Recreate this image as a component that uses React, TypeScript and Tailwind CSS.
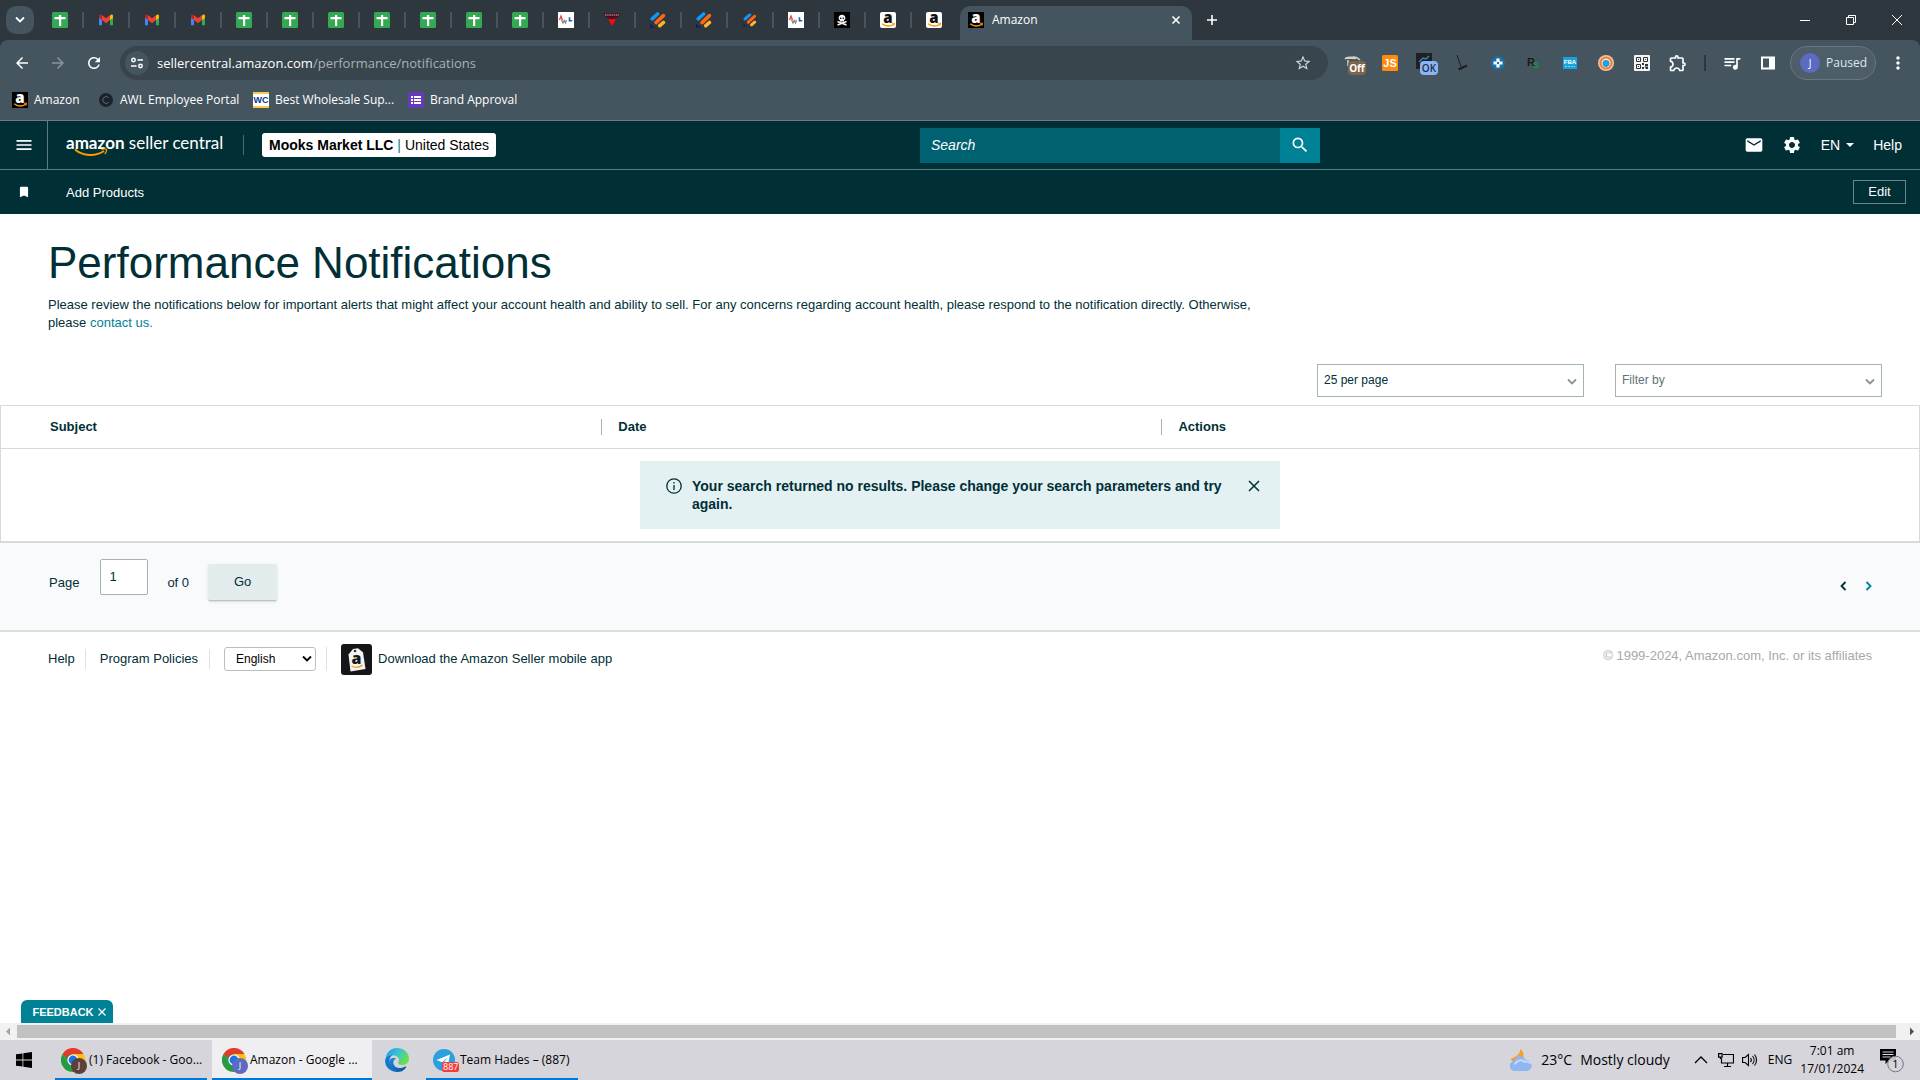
import type { ReactNode } from "react";
import {
  MdArrowBack,
  MdArrowForward,
  MdRefresh,
  MdStarBorder,
  MdQueueMusic,
  MdOutlineExtension,
  MdMoreVert,
  MdMenu,
  MdEmail,
  MdSettings,
  MdSearch,
  MdBookmark,
} from "react-icons/md";

const SheetsIcon = () => (
  <svg viewBox="0 0 16 16" className="w-4 h-4">
    <rect width="16" height="16" rx="1.5" fill="#34a853" />
    <path d="M2.500 5h11v2.200h-11zM7 3h2.200v11H7z" fill="#fff" />
  </svg>
);

const GmailIcon = () => (
  <svg viewBox="0 0 16 16" className="w-4 h-4">
    <path d="M1 4.5v8.8h3V6.5z" fill="#4285f4" />
    <path d="M12 6.500v6.800H15V4.500z" fill="#34a853" />
    <path d="M12 3.400v4.700L15 5.900V4c0-1.400-1.300-1.900-2.200-1.100z" fill="#fbbc04" />
    <path d="M4 8V3.200L8 6.300l4-3.100V8L8 11.200z" fill="#ea4335" />
    <path d="M1 4v1.800L4 8V3.400l-.8-.5C2.300 2.100 1 2.600 1 4z" fill="#c5221f" />
  </svg>
);

const AwlIcon = () => (
  <svg viewBox="0 0 16 16" className="w-4 h-4">
    <rect width="16" height="16" fill="#fff" />
    <path d="M1.500 8L3 4l1.500 4" fill="none" stroke="#e0454a" strokeWidth="1.300" />
    <path d="M3.500 7.500L5 11l1.300-2.500L7.500 11l1-3" fill="none" stroke="#888" strokeWidth="1.300" />
    <path d="M11.500 5.200v3.600h2.700" fill="none" stroke="#2d56b5" strokeWidth="1.600" />
  </svg>
);

const RedTriangleIcon = () => (
  <svg viewBox="0 0 16 16" className="w-4 h-4">
    <path d="M0 1.500h16L14.500 5h-13z" fill="#351326" />
    <path d="M1 3h14" stroke="#c9737c" strokeWidth="1.500" strokeDasharray="1.500 .7" />
    <path d="M2.500 5h11L12 7.500H4z" fill="#5d0e1c" />
    <path d="M4 7.300h8L8.300 14z" fill="#f10d15" />
  </svg>
);

const StripesIcon = () => (
  <svg viewBox="0 0 16 16" className="w-4 h-4">
    <path d="M0 11.500V16h5z" fill="#14205c" />
    <g strokeLinecap="round" strokeWidth="3.600">
      <path d="M2.200 6.800L7.600 2" stroke="#1496f5" />
      <path d="M6 10.600l7.400-7" stroke="#ff6513" />
      <path d="M9.800 13.700l3.600-3.200" stroke="#fdb52a" />
    </g>
  </svg>
);

const SmallStripesIcon = () => (
  <div className="scale-85">
    <StripesIcon />
  </div>
);

const SkullIcon = () => (
  <svg viewBox="0 0 16 16" className="w-4 h-4">
    <rect width="16" height="16" fill="#000" />
    <path d="M8 2.700c-2.200 0-3.400 1.400-3.400 3.200 0 1.200.6 2 1.400 2.400v1.300h4V8.300c.8-.4 1.400-1.200 1.400-2.400C11.400 4.100 10.200 2.700 8 2.700z" fill="#f4f4f4" />
    <path d="M3.500 9.500l9 3.500M12.500 9.500l-9 3.500" stroke="#f4f4f4" strokeWidth="1.600" />
    <circle cx="6.700" cy="6.200" r=".8" />
    <circle cx="9.300" cy="6.200" r=".8" />
  </svg>
);

type AmazonIconProps = { bg: string; fg: string };

const AmazonIcon = ({ bg, fg }: AmazonIconProps) => (
  <svg viewBox="0 0 16 16" className="w-4 h-4 overflow-visible">
    <rect width="16" height="16" rx={fg === "#fff" ? 0 : 2} fill={bg} />
    <text
      x="8"
      y="10.500"
      textAnchor="middle"
      fontFamily="Open Sans, sans-serif"
      fontWeight="800"
      fontSize="15"
      fill={fg}
    >
      a
    </text>
    <path d="M2.200 11.800c3.500 3 8.500 2.800 11.500.4" fill="none" stroke="#ff9900" strokeWidth="1.400" />
    <path d="M12 11.300l2.500-.2-.4 2.500" fill="none" stroke="#ff9900" strokeWidth="1" />
  </svg>
);

const ChromeIcon = () => (
  <svg viewBox="0 0 24 24" className="w-6 h-6">
    <circle cx="12" cy="12" r="12" fill="#fbc116" />
    <path d="M1.600 6A12 12 0 0 0 12 24l5.200-9L12 12 6.800 15z" fill="#229a48" />
    <path d="M1.600 6l5.200 9L12 12V6.500z" fill="#229a48" />
    <path d="M1.600 6A12 12 0 0 1 22.400 6H12a6 6 0 0 0-5.600 4z" fill="#e33b2e" />
    <circle cx="12" cy="12" r="5.600" fill="#fff" />
    <circle cx="12" cy="12" r="4.400" fill="#1a73e8" />
  </svg>
);

const EdgeIcon = () => (
  <svg viewBox="0 0 24 24" className="w-6 h-6">
    <defs>
      <linearGradient id="edgeTop" x1="0" y1="0" x2="1" y2="0.500">
        <stop offset="0" stopColor="#1d9be0" />
        <stop offset="0.500" stopColor="#35c1d8" />
        <stop offset="1" stopColor="#6be04e" />
      </linearGradient>
      <linearGradient id="edgeBottom" x1="0" y1="0" x2="1" y2="1">
        <stop offset="0" stopColor="#1b8de0" />
        <stop offset="1" stopColor="#0c4fa0" />
      </linearGradient>
    </defs>
    <path d="M.500 11C1 4.500 6 0 12 0c7 0 12 5 12 10.500 0 4-3 6.500-6.500 6.500-3 0-4.500-1-4.500-2 0-.8 1-1.200 1-3C14 9.500 11.500 7.500 8 7.500 4 7.500 1.500 9 .500 11z" fill="url(#edgeTop)" />
    <path d="M.2 12C.8 9 4 7.200 7.500 7.200c-2.500 1.300-3.500 4-3 7 .8 4.300 4 7.500 8.500 9.300C6 24.800-.5 19.500.2 12z" fill="#1277cf" />
    <path d="M11 10.500c-2 1-3.200 3-2.500 5.500 1 3.500 6 5.500 11.500 2.700.8-.4 1.500.3 1 1C18.500 23 15.500 24 12.500 24c-5-1-8.500-5-8.500-9.500 0-3.500 3-5.500 7-4z" fill="url(#edgeBottom)" />
  </svg>
);

const TelegramIcon = () => (
  <svg viewBox="0 0 24 24" className="w-6 h-6">
    <circle cx="12" cy="12" r="11" fill="#2ba0dc" />
    <path d="M4.500 12L18 6.500 15.800 18l-4.300-3.200 4.500-5.500-6 5z" fill="#fff" />
  </svg>
);

const WindowsIcon = () => (
  <svg viewBox="0 0 16 16" className="w-4 h-4">
    <path d="M0 2.300l6.500-.9v6.200H0zM7.300 1.300L16 0v7.600H7.300zM0 8.400h6.500v6.200L0 13.700zM7.300 8.400H16V16l-8.700-1.200z" />
  </svg>
);

const Chevron = ({ className }: { className: string }) => (
  <svg viewBox="0 0 10 8" className={className} fill="none" stroke="currentColor" strokeWidth="1.800">
    <path d="M1 1.500l4 4 4-4" />
  </svg>
);

const pinnedTabs: { name: string; icon: ReactNode }[] = [
  { name: "Sheet 1", icon: <SheetsIcon /> },
  { name: "Mail 1", icon: <GmailIcon /> },
  { name: "Mail 2", icon: <GmailIcon /> },
  { name: "Mail 3", icon: <GmailIcon /> },
  { name: "Sheet 2", icon: <SheetsIcon /> },
  { name: "Sheet 3", icon: <SheetsIcon /> },
  { name: "Sheet 4", icon: <SheetsIcon /> },
  { name: "Sheet 5", icon: <SheetsIcon /> },
  { name: "Sheet 6", icon: <SheetsIcon /> },
  { name: "Sheet 7", icon: <SheetsIcon /> },
  { name: "Sheet 8", icon: <SheetsIcon /> },
  { name: "Portal 1", icon: <AwlIcon /> },
  { name: "Store", icon: <RedTriangleIcon /> },
  { name: "Tracker 1", icon: <StripesIcon /> },
  { name: "Tracker 2", icon: <StripesIcon /> },
  { name: "Tracker 3", icon: <SmallStripesIcon /> },
  { name: "Portal 2", icon: <AwlIcon /> },
  { name: "Skull", icon: <SkullIcon /> },
  { name: "Shop 1", icon: <AmazonIcon bg="#fff" fg="#111" /> },
  { name: "Shop 2", icon: <AmazonIcon bg="#fff" fg="#111" /> },
];

const extensions: { name: string; icon: ReactNode }[] = [
  {
    name: "Camel",
    icon: (
      <svg viewBox="0 0 24 24" className="w-6 h-6">
        <path d="M3 8c2-3 5-1 9-2 3 0 4 1 6 3M6 9v6M4 7l10 .5" fill="none" stroke="#cfd0cf" strokeWidth="1.600" />
        <rect x="6" y="10" width="18" height="14" rx="4" fill="#7d654a" />
        <text x="15" y="21" textAnchor="middle" fontSize="10" fontWeight="700" fontFamily="Open Sans, sans-serif" fill="#fff">
          Off
        </text>
      </svg>
    ),
  },
  {
    name: "JS",
    icon: (
      <svg viewBox="0 0 16 16" className="w-4 h-4">
        <rect width="16" height="16" rx="1.500" fill="#ff8a0c" />
        <text x="8" y="12" textAnchor="middle" fontSize="11" fontWeight="700" fontFamily="Liberation Sans, sans-serif" fill="#fff">
          JS
        </text>
      </svg>
    ),
  },
  {
    name: "Status",
    icon: (
      <svg viewBox="0 0 24 24" className="w-6 h-6">
        <rect x="2" y="2" width="16" height="16" fill="#231f20" />
        <path d="M5 11l4-4 3 1 3-3" fill="none" stroke="#1d8fc4" strokeWidth="1.500" />
        <rect x="6" y="10" width="18" height="14" rx="4" fill="#8ab4f8" />
        <text x="15" y="21" textAnchor="middle" fontSize="10" fontWeight="600" fontFamily="Open Sans, sans-serif" fill="#22304a">
          OK
        </text>
      </svg>
    ),
  },
  {
    name: "Keepa",
    icon: (
      <svg viewBox="0 0 16 16" className="w-4 h-4" fill="none" stroke="#1c1f22">
        <path d="M3 0l4.500 13" strokeWidth="1" />
        <path d="M4.500 14.500l8.500-4" strokeWidth="2" />
      </svg>
    ),
  },
  {
    name: "Helper",
    icon: (
      <svg viewBox="0 0 16 16" className="w-4 h-4">
        <circle cx="8" cy="8" r="7" fill="#1c6ea6" />
        <path d="M8 3.500v9M3.500 8h9" stroke="#fff" strokeWidth="3.200" />
        <circle cx="8" cy="8" r="1.200" fill="#1c6ea6" />
      </svg>
    ),
  },
  {
    name: "RS",
    icon: (
      <svg viewBox="0 0 16 16" className="w-4 h-4" fontFamily="Liberation Sans, sans-serif" fontWeight="700">
        <text x="1" y="11" fontSize="11" fill="#1b1b1b">
          R
        </text>
        <text x="7" y="13" fontSize="9" fill="#139a40">
          S
        </text>
      </svg>
    ),
  },
  {
    name: "FBA",
    icon: (
      <svg viewBox="0 0 14 14" className="w-3.5 h-3.5">
        <rect y="1" width="14" height="12" fill="#18a3dc" />
        <text x="7" y="8" textAnchor="middle" fontSize="6" fontWeight="700" fontFamily="Liberation Sans, sans-serif" fill="#fff">
          FBA
        </text>
        <path d="M2 10.500h10" stroke="#7fd0ef" strokeDasharray="2 1" />
      </svg>
    ),
  },
  {
    name: "Ring",
    icon: (
      <svg viewBox="0 0 16 16" className="w-4 h-4">
        <circle cx="8" cy="8" r="8" fill="#f9c49a" />
        <circle cx="8" cy="8" r="6.500" fill="#ee7d3b" />
        <circle cx="8" cy="8" r="4.500" fill="#f6e3d0" />
        <circle cx="8" cy="8.500" r="3.400" fill="#1ba4dc" />
      </svg>
    ),
  },
  {
    name: "QR",
    icon: (
      <svg viewBox="0 0 16 16" className="w-4 h-4">
        <rect width="16" height="16" rx="1" fill="#f3f3f3" />
        <path d="M2.500 2.500h4v4h-4zM9.500 2.500h4v4h-4zM2.500 9.500h4v4h-4z" fill="none" stroke="#333" />
        <path d="M8 8h2v2H8zM11 9h3v2h-3zM8 12h2v2H8zM10.500 11.500h3.500V14h-2zM4 4h1v1H4zM11 4h1v1h-1zM4 11h1v1H4z" fill="#333" />
      </svg>
    ),
  },
  { name: "Extensions", icon: <MdOutlineExtension className="w-5 h-5 text-white" /> },
];

const bookmarks: { label: string; width: string; icon: ReactNode }[] = [
  { label: "Amazon", width: "w-[86px]", icon: <AmazonIcon bg="#000" fg="#fff" /> },
  {
    label: "AWL Employee Portal",
    width: "w-[155px]",
    icon: (
      <svg viewBox="0 0 16 16" className="w-4 h-4">
        <circle cx="8" cy="8" r="7" fill="#1a222b" />
        <path d="M10.500 5.500a3.400 3.400 0 1 0 0 5" fill="none" stroke="#5b6975" />
      </svg>
    ),
  },
  {
    label: "Best Wholesale Sup...",
    width: "w-[155px]",
    icon: (
      <svg viewBox="0 0 16 16" className="w-4 h-4">
        <rect width="16" height="16" fill="#fff" />
        <path d="M0 0h16v2H0zM0 14h16v2H0z" fill="#fcc944" />
        <text x="8" y="11" textAnchor="middle" fontSize="9" fontWeight="700" fontFamily="Liberation Sans, sans-serif" fill="#0a3597">
          WC
        </text>
      </svg>
    ),
  },
  {
    label: "Brand Approval",
    width: "w-[120px]",
    icon: (
      <svg viewBox="0 0 16 16" className="w-4 h-4">
        <rect width="16" height="16" rx="1" fill="#673ab7" />
        <path d="M3 4h2v2H3zM3 7h2v2H3zM3 10h2v2H3zM6 4h7v2H6zM6 7h7v2H6zM6 10h7v2H6z" fill="#fff" />
      </svg>
    ),
  },
];

const BrowserChrome = () => (
  <div className="font-['Open_Sans',sans-serif] text-white bg-[#2d373d]">
    <div className="h-10 flex items-center pl-1.5">
      <button aria-label="Search tabs" className="w-7 h-7 mr-[3px] rounded-[10px] bg-[#45555f] flex items-center justify-center">
        <Chevron className="w-2.5 h-2" />
      </button>
      {pinnedTabs.map((tab, i) => (
        <button
          key={tab.name}
          aria-label={tab.name}
          className="w-[46px] h-4 flex items-center justify-center relative"
        >
          {tab.icon}
          {i < pinnedTabs.length - 1 && (
            <span className="absolute right-0 w-0.5 h-4 translate-x-px bg-[#45555f]" />
          )}
        </button>
      ))}
      <div className="ml-[3px] w-[232px] h-[34px] self-end rounded-t-[10px] bg-[#45555f] flex items-center pl-2 pr-2.5 pb-1.5">
        <AmazonIcon bg="#000" fg="#fff" />
        <span className="ml-2 grow text-[12px]">Amazon</span>
        <button aria-label="Close tab">
          <svg viewBox="0 0 12 12" className="w-3 h-3" stroke="#fff" strokeWidth="1.600">
            <path d="M2.500 2.500l7 7M9.500 2.500l-7 7" />
          </svg>
        </button>
      </div>
      <button aria-label="New tab" className="ml-3.5 mr-auto">
        <svg viewBox="0 0 12 12" className="w-3 h-3" stroke="#fff" strokeWidth="1.600">
          <path d="M6 1v10M1 6h10" />
        </svg>
      </button>
      <button aria-label="Minimize" className="w-[46px] flex justify-center">
        <svg viewBox="0 0 10 10" className="w-2.5 h-2.5" stroke="#fff">
          <path d="M0 5.500h10" />
        </svg>
      </button>
      <button aria-label="Restore" className="w-[46px] flex justify-center">
        <svg viewBox="0 0 10 10" className="w-2.5 h-2.5" stroke="#fff" fill="none">
          <path d="M.500 2.500h7v7h-7zM2.500 2.500v-2h7v7h-2" />
        </svg>
      </button>
      <button aria-label="Close" className="w-[46px] flex justify-center">
        <svg viewBox="0 0 10 10" className="w-2.5 h-2.5" stroke="#fff">
          <path d="M0 0l10 10M10 0L0 10" />
        </svg>
      </button>
    </div>

    <div className="bg-[#45555f] rounded-t-lg border-b border-[#6f7c84]">
      <div className="h-11 pt-0.5 flex items-center">
        <button aria-label="Back" className="w-9 ml-1 flex justify-center">
          <MdArrowBack className="w-[18px] h-[18px]" />
        </button>
        <button aria-label="Forward" className="w-9 flex justify-center text-[#8b969c]">
          <MdArrowForward className="w-[18px] h-[18px]" />
        </button>
        <button aria-label="Reload" className="w-9 flex justify-center">
          <MdRefresh className="w-[18px] h-[18px]" />
        </button>
        <div className="ml-2 grow h-[34px] rounded-full bg-[#38454c] flex items-center pl-[5px] pr-4">
          <button aria-label="Site information" className="w-6 h-6 rounded-full bg-[#45555f] flex items-center justify-center">
            <svg viewBox="0 0 14 14" className="w-3.5 h-3.5" fill="none" stroke="#fff" strokeWidth="1.500">
              <circle cx="3.500" cy="4" r="1.700" />
              <path d="M7.500 4H13M1 10h5.500" />
              <circle cx="10.500" cy="10" r="1.700" />
            </svg>
          </button>
          <div role="textbox" aria-label="Address" className="ml-2 grow text-[13px] leading-5">
            sellercentral.amazon.com<span className="text-[#a9b1b5]">/performance/notifications</span>
          </div>
          <button aria-label="Bookmark this page">
            <MdStarBorder className="w-[18px] h-[18px] text-[#d0d4d6]" />
          </button>
        </div>
        <div className="flex items-center ml-2">
          {extensions.map((ext) => (
            <button key={ext.name} aria-label={ext.name} className="w-9 h-7 flex items-center justify-center">
              {ext.icon}
            </button>
          ))}
        </div>
        <span className="w-0.5 h-4 ml-2 mr-2 bg-[#2d373d]" />
        <button aria-label="Media" className="w-9 flex justify-center">
          <MdQueueMusic className="w-5 h-5" />
        </button>
        <button aria-label="Side panel" className="w-9 flex justify-center">
          <svg viewBox="0 0 16 16" className="w-4 h-4">
            <path d="M1 1.500h14v13H1zM3 3.500v9h6v-9z" fill="#fff" fillRule="evenodd" />
          </svg>
        </button>
        <button className="ml-1 w-[86px] h-[34px] rounded-full border border-[#667781] bg-[#4d5e69] flex items-center pl-[9px] gap-1.5 text-[12px] text-[#dbe7f6]">
          <span className="w-5 h-5 rounded-full bg-[#5c6bc0] text-[10px] text-white flex items-center justify-center">J</span>
          Paused
        </button>
        <button aria-label="Menu" className="w-11 flex justify-center">
          <MdMoreVert className="w-5 h-5" />
        </button>
      </div>
      <div className="h-9 pb-1 flex items-center pl-3 text-[12px]">
        {bookmarks.map((b) => (
          <a key={b.label} href="#" className={`${b.width} flex items-center gap-1.5 whitespace-nowrap`}>
            {b.icon}
            {b.label}
          </a>
        ))}
      </div>
    </div>
  </div>
);

const SiteHeader = () => (
  <header className="bg-[#002f36] text-white text-[14px]">
    <div className="h-[49px] flex items-center border-b border-[#5f7b80]">
      <button aria-label="Open menu" className="w-12 h-12 flex items-center justify-center border-r border-[#5f7b80]">
        <MdMenu className="w-5 h-5" />
      </button>
      <a href="#" className="ml-[18px] w-40 pb-1 font-['Lato',sans-serif] text-[17px] leading-5 whitespace-nowrap relative">
        <b>amazon</b> seller central
        <svg viewBox="0 0 36 10" className="absolute left-2 top-[15px] w-9 h-2.5" fill="none" stroke="#ff9900">
          <path d="M1 1.500c8 7 21 7 29 1.500" strokeWidth="2" />
          <path d="M27.500 1.500c2-.6 4-.8 4.800-.2.600.8-.2 3-1.500 4.700" strokeWidth="1.300" />
        </svg>
      </a>
      <span className="w-px h-5 ml-[17px] bg-[#4e6b70]" />
      <button className="ml-[18px] h-6 px-[7px] rounded-[3px] bg-white text-black whitespace-nowrap">
        <b>Mooks Market LLC</b> <span className="text-[#008296]">|</span> United States
      </button>
      <form role="search" className="ml-auto flex h-[35px] w-[400px]">
        <input
          type="text"
          aria-label="Search"
          placeholder="Search"
          className="grow px-[11px] bg-[#006170] italic placeholder:text-white"
        />
        <button type="button" aria-label="Submit search" className="w-10 bg-[#008296] flex items-center justify-center">
          <MdSearch className="w-5 h-5" />
        </button>
      </form>
      <div className="w-[600px] flex items-center justify-end pr-[18px]">
        <button aria-label="Messages">
          <MdEmail className="w-5 h-5" />
        </button>
        <button aria-label="Settings" className="ml-[18px]">
          <MdSettings className="w-5 h-5" />
        </button>
        <button className="ml-[19px] flex items-center gap-1.5">
          EN
          <svg viewBox="0 0 8 4" className="w-2 h-1" fill="#fff">
            <path d="M0 0h8L4 4z" />
          </svg>
        </button>
        <a href="#" className="ml-[19px]">Help</a>
      </div>
    </div>
    <div className="h-11 flex items-center text-[13px]">
      <button aria-label="Bookmarks" className="w-12 flex justify-center">
        <MdBookmark className="w-3.5 h-3.5" />
      </button>
      <a href="#" className="ml-[18px] pt-0.5">Add Products</a>
      <button className="ml-auto mr-3.5 w-[53px] h-6 border border-[#6a8488]">Edit</button>
    </div>
  </header>
);

type FilterSelectProps = { id: string; label: string; text: string; tone: string };

const FilterSelect = ({ id, label, text, tone }: FilterSelectProps) => (
  <div className="relative w-[267px]">
    <label htmlFor={id} className="sr-only">
      {label}
    </label>
    <select
      id={id}
      className={`${tone} appearance-none w-full h-[33px] px-1.5 pb-0.5 border border-[#a2b3b3] bg-white text-[12px]`}
    >
      <option>{text}</option>
    </select>
    <Chevron className="absolute right-[7px] top-3.5 w-2.5 h-2 text-[#879596]" />
  </div>
);

const Notifications = () => (
  <main>
    <div className="px-12 pt-[21px]">
      <h1 className="text-[44px] leading-14">Performance Notifications</h1>
      <p className="mt-[5px] max-w-[1230px] leading-[18px]">
        Please review the notifications below for important alerts that might affect your account health and ability to
        sell. For any concerns regarding account health, please respond to the notification directly. Otherwise, please{" "}
        <a href="#" className="text-[#008296]">contact us.</a>
      </p>
    </div>
    <div className="mt-8 mb-2 pr-[38px] flex justify-end gap-[31px]">
      <FilterSelect id="perPage" label="Results per page" text="25 per page" tone="text-[#002f36]" />
      <FilterSelect id="filterBy" label="Filter" text="Filter by" tone="text-[#5f7377]" />
    </div>

    <div className="border border-b-2 border-[#d5dbdb]">
      <table className="w-full table-fixed">
        <thead>
          <tr className="h-[42px] border-b border-[#d5dbdb] text-left">
            <th className="w-[31.3%] pl-[49px]">Subject</th>
            <th className="w-[29.2%]">
              <div className="h-4 leading-4 pl-4 border-l border-[#a2b3b3]">Date</div>
            </th>
            <th>
              <div className="h-4 leading-4 pl-4 border-l border-[#a2b3b3]">Actions</div>
            </th>
          </tr>
        </thead>
        <tbody>
          <tr>
            <td colSpan={3} className="py-3">
              <div role="alert" className="mx-auto w-[640px] h-[68px] bg-[#e3f1f3] flex items-start pt-4 pl-[26px] pr-5">
                <svg viewBox="0 0 16 16" className="w-4 h-4 mt-px shrink-0" fill="none" stroke="#002f36" strokeWidth="1.300">
                  <circle cx="8" cy="8" r="7.200" />
                  <path d="M8 7v5M8 4v1.500" />
                </svg>
                <p className="ml-2.5 w-[546px] text-[14px] leading-[18px] font-bold">
                  Your search returned no results. Please change your search parameters and try again.
                </p>
                <button aria-label="Dismiss" className="ml-auto mt-[3px]">
                  <svg viewBox="0 0 12 12" className="w-3 h-3" stroke="#002f36" strokeWidth="1.500">
                    <path d="M1 1l10 10M11 1L1 11" />
                  </svg>
                </button>
              </div>
            </td>
          </tr>
        </tbody>
      </table>
    </div>

    <div className="bg-[#f8fafb] border-b-2 border-[#d9dfe1] pt-4 pb-[23px] pl-[49px] pr-[46px] flex items-center">
      <label htmlFor="page">Page</label>
      <div className="ml-[21px] h-12">
        <input
          id="page"
          type="text"
          defaultValue="1"
          className="w-12 h-9 px-2 border border-[#a2b3b3] rounded-[2px] bg-white"
        />
      </div>
      <span className="ml-[19px]">of 0</span>
      <button className="ml-[19px] w-[69px] h-[37px] rounded-[2px] bg-[#e3eced] border-b border-[#b9c3c5] shadow-sm">Go</button>
      <div className="ml-auto pt-1.5 flex gap-4">
        <button aria-label="Previous page">
          <Chevron className="w-2.5 h-2 rotate-90" />
        </button>
        <button aria-label="Next page">
          <Chevron className="w-2.5 h-2 -rotate-90 text-[#008296]" />
        </button>
      </div>
    </div>
  </main>
);

const SiteFooter = () => (
  <footer className="px-12 pt-3 flex items-center">
    <a href="#">Help</a>
    <span className="w-px h-5 ml-2.5 mr-3.5 bg-[#dfe3e4]" />
    <a href="#">Program Policies</a>
    <span className="w-px h-5 ml-[11px] mr-3.5 bg-[#dfe3e4]" />
    <div className="relative w-[92px]">
      <select
        aria-label="Language"
        className="appearance-none w-full h-6 pl-[11px] border border-[#b9bfc0] rounded-[3px] bg-white text-black text-[12px]"
      >
        <option>English</option>
      </select>
      <Chevron className="absolute right-1 top-2 w-2.5 h-2 text-black" />
    </div>
    <span className="w-px h-6 ml-2.5 mr-3.5 bg-[#dfe3e4]" />
    <a href="#" className="flex items-center gap-1.5">
      <svg viewBox="0 0 31 31" className="w-[31px] h-[31px]">
        <rect width="31" height="31" rx="3" fill="#151617" />
        <path d="M7.500 10.500L12 5l5-.8 5 4L24.500 25l-15 2.500z" fill="#f4f4f2" />
        <circle cx="14" cy="7" r="1.300" fill="#333" />
        <text x="15.500" y="20" textAnchor="middle" fontSize="16" fontWeight="800" fontFamily="Open Sans, sans-serif" fill="#151617">
          a
        </text>
        <path d="M10.500 22c3.500 2 7.500 1.600 11-.8" fill="none" stroke="#f79b1c" strokeWidth="1.400" />
      </svg>
      Download the Amazon Seller mobile app
    </a>
    <p className="ml-auto pb-1.5 text-[#a5a9aa]">© 1999-2024, Amazon.com, Inc. or its affiliates</p>
  </footer>
);

const Scrollbar = () => (
  <div className="h-[17px] bg-[#f1f1f1] flex items-center">
    <svg viewBox="0 0 17 17" className="w-[17px] h-[17px]" fill="#a3a3a3">
      <path d="M10 4.500v8l-4-4z" />
    </svg>
    <div className="grow h-[13px] bg-[#c1c1c1]" />
    <svg viewBox="0 0 17 17" className="w-[17px] h-[17px] ml-[7px]" fill="#505050">
      <path d="M7 4.500v8l4-4z" />
    </svg>
  </div>
);

type TaskButtonProps = { title: string; style: string; icon: ReactNode };

const TaskButton = ({ title, style, icon }: TaskButtonProps) => (
  <button className={`${style} h-10 border-b-2 border-[#0078d7] flex items-center pt-0.5 whitespace-nowrap`}>
    {icon}
    {title}
  </button>
);

const Taskbar = () => (
  <div className="h-10 bg-[#d6d5dc] text-black text-[12px] font-['Open_Sans',sans-serif] flex items-center">
    <button aria-label="Start" className="w-12 flex justify-center">
      <WindowsIcon />
    </button>
    <TaskButton
      title="(1) Facebook - Goo..."
      style="ml-[7px] w-[152px] pl-1.5"
      icon={
        <span className="relative mr-1">
          <ChromeIcon />
          <span className="absolute left-2.5 top-2.5 w-4 h-4 rounded-full bg-[#5d4037] text-[9px] text-white flex items-center justify-center">J</span>
        </span>
      }
    />
    <TaskButton
      title="Amazon - Google ..."
      style="ml-[5px] w-40 pl-2.5 bg-[#efeff2]"
      icon={
        <span className="relative mr-1">
          <ChromeIcon />
          <span className="absolute left-2.5 top-2.5 w-4 h-4 rounded-full bg-[#5c6bc0] text-[9px] text-white flex items-center justify-center">J</span>
        </span>
      }
    />
    <button aria-label="Edge" className="ml-[13px] mr-[17px]">
      <EdgeIcon />
    </button>
    <TaskButton
      title="Team Hades – (887)"
      style="w-[152px] pl-1.5"
      icon={
        <span className="relative mr-1">
          <TelegramIcon />
          <span className="absolute left-2.5 top-3.5 px-px rounded-[2px] bg-[#f03e3e] text-[9px] leading-[10px] text-white">887</span>
        </span>
      }
    />
    <button className="ml-auto flex items-center text-[14px] whitespace-nowrap">
      <svg viewBox="0 0 24 24" className="w-6 h-6">
        <path d="M11 1c.5 4-2 7-9.500 10 1 2 3 3 5.500 3 5 0 8-3 7.500-8C14 4 13 2 11 1z" fill="#f3a12c" />
        <path d="M5.500 23a5 5 0 0 1-.5-9.900A6 6 0 0 1 16.500 12 5.600 5.600 0 0 1 18.500 23z" fill="#8fb6f2" />
        <path d="M6 16.500a6 6 0 0 1 10-2.500 5 5 0 0 1 6 2" fill="none" stroke="#c3dafb" strokeWidth="2" />
      </svg>
      <span className="ml-2">23°C</span>
      <span className="ml-2">Mostly cloudy</span>
    </button>
    <button aria-label="Hidden icons" className="ml-6">
      <svg viewBox="0 0 14 8" className="w-3.5 h-2" fill="none" stroke="#000" strokeWidth="1.300">
        <path d="M1 7l6-6 6 6" />
      </svg>
    </button>
    <button aria-label="Network" className="ml-2.5">
      <svg viewBox="0 0 16 16" className="w-4 h-4" fill="none" stroke="#000" strokeWidth="1.200">
        <path d="M5 2.500h10.500v8.500H3.500V6.500M9.500 11v3.500M6 14.500h7M.600 1.600h3.500v3.500H.600zM2.500 5v1.500h1" />
      </svg>
    </button>
    <button aria-label="Volume" className="ml-2">
      <svg viewBox="0 0 16 16" className="w-4 h-4" fill="none" stroke="#000" strokeWidth="1.100">
        <path d="M.600 5.500h2.500L6.500 2.500v11l-3.400-3H.600zM8.500 6a3 3 0 0 1 0 4M10.500 4a6 6 0 0 1 0 8M12.500 2.500a8.500 8.500 0 0 1 0 11" />
      </svg>
    </button>
    <span className="ml-2.5">ENG</span>
    <div className="ml-2 text-center leading-[18px]">
      <div>7:01 am</div>
      <div>17/01/2024</div>
    </div>
    <button aria-label="Notifications" className="ml-4 mr-4">
      <svg viewBox="0 0 24 26" className="w-6 h-[26px]">
        <path d="M0 2h16v11.500H9L5.500 17v-3.500H0z" fill="#000" />
        <path d="M2.500 5h11M2.500 7.500h11M2.500 10h8" stroke="#d6d5dc" strokeWidth="1" />
        <circle cx="15.500" cy="17" r="7.800" fill="#d6d5dc" fillOpacity="0.900" stroke="#777" />
        <text x="15.500" y="21" textAnchor="middle" fontSize="11" fontFamily="Open Sans, sans-serif">
          1
        </text>
      </svg>
    </button>
  </div>
);

export default function App() {
  return (
    <div className="min-h-screen flex flex-col bg-white text-[#002f36] text-[13px] leading-[18px] font-['Liberation_Sans',Arial,sans-serif]">
      <BrowserChrome />
      <SiteHeader />
      <Notifications />
      <SiteFooter />
      <button className="mt-auto ml-[21px] h-[23px] w-[92px] pl-1 self-start rounded-t-md bg-[#008296] text-white text-[11px] font-bold flex items-center justify-center gap-1">
        FEEDBACK
        <svg viewBox="0 0 8 8" className="w-2 h-2" stroke="#fff" strokeWidth="1.300">
          <path d="M.500.500l7 7M7.500.500l-7 7" />
        </svg>
      </button>
      <Scrollbar />
      <Taskbar />
    </div>
  );
}
